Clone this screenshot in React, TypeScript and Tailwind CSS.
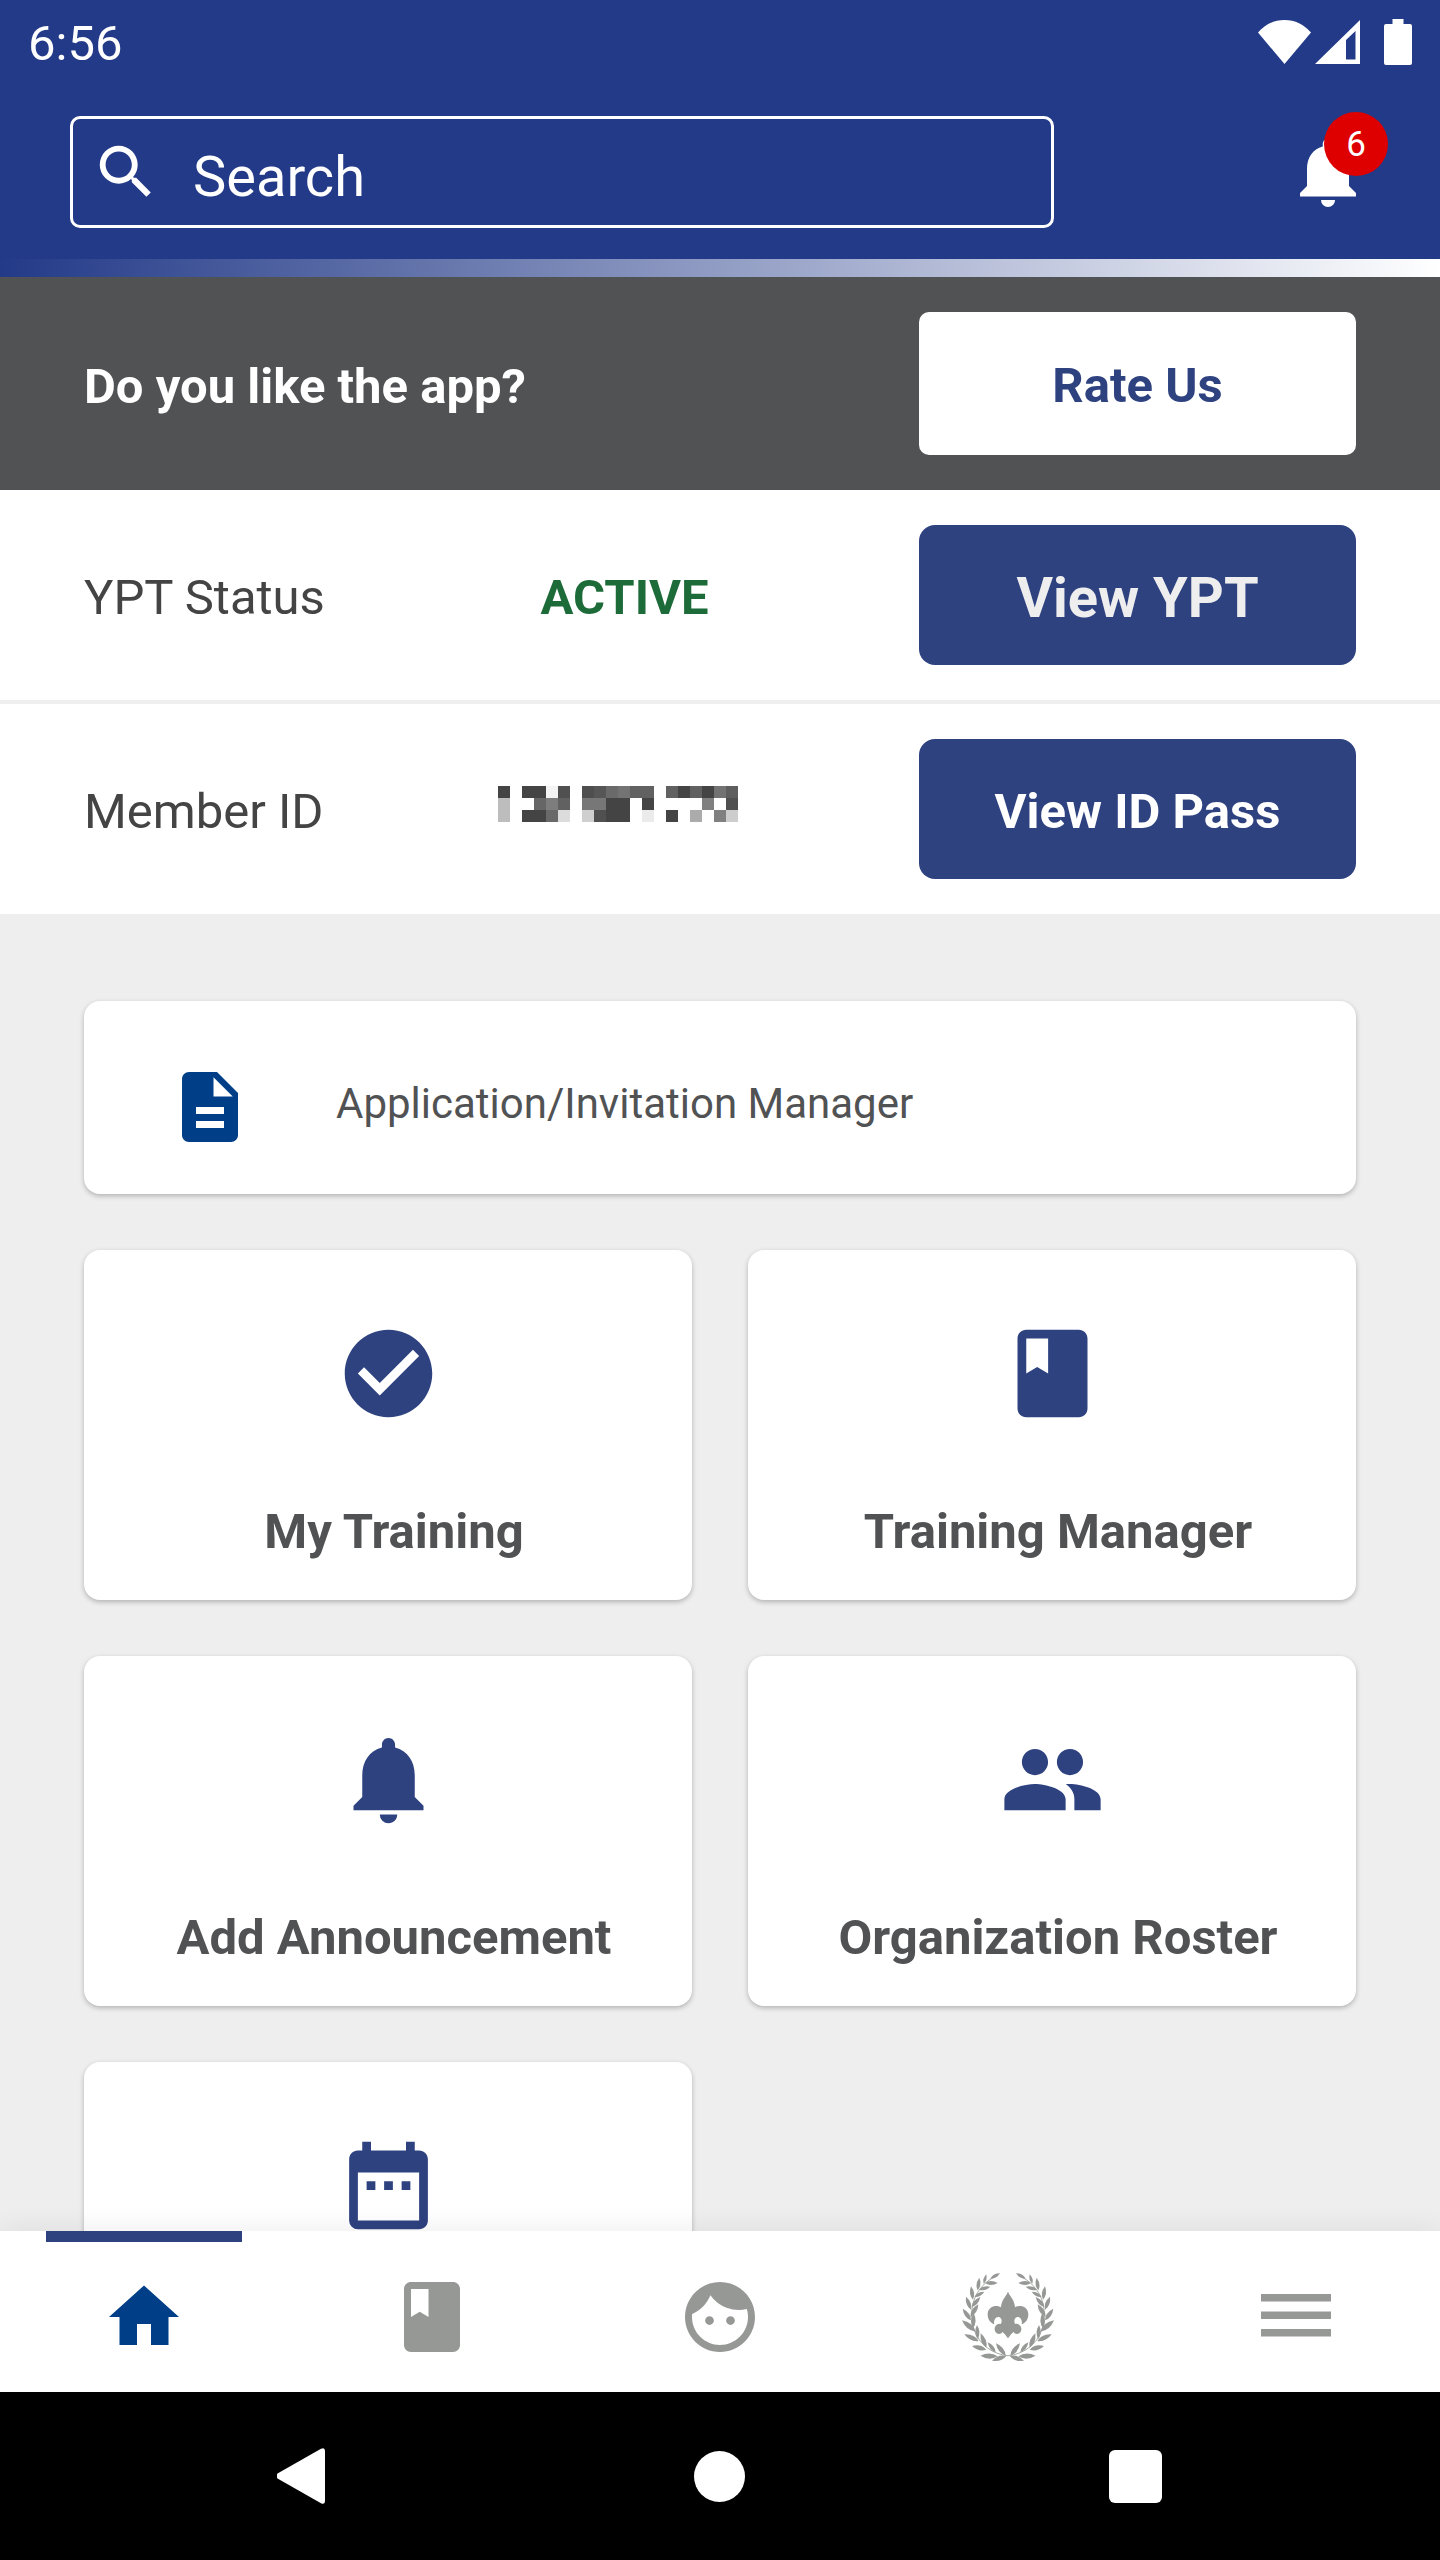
import type { ReactNode } from 'react'
import {
  MdBook,
  MdCheckCircle,
  MdDateRange,
  MdDescription,
  MdFace,
  MdHome,
  MdNotifications,
  MdPeople,
  MdSearch,
} from 'react-icons/md'

// Grey level per 12px block, null = nothing painted
const idBlocks = [
  ['#444', null, '#444', '#444', '#f4f4f4', '#505050', null, '#4e4e4e', '#565656', '#6a6a6a', '#737373', '#616161', '#616161', null, '#616161', '#444', '#616161', '#444', '#737373', '#5e5e5e'],
  ['#bdbdbd', null, null, '#666', '#7d7d7d', '#616161', null, '#777', '#777', '#444', '#444', null, '#444', null, null, null, null, '#808080', null, '#505050'],
  ['#bdbdbd', null, '#444', '#444', '#696969', '#dcdcdc', null, '#cfcfcf', '#505050', '#444', '#444', null, '#ebebeb', null, '#444', null, '#ababab', null, '#808080', '#cdcdcd'],
]

// Laurel leaves, left branch: base x/y -> tip x/y
const leaves = [
  [230, 345, 187, 359],
  [204, 346, 152, 344],
  [170, 326, 127, 315],
  [147, 300, 104, 280],
  [138, 272, 97, 238],
  [124, 238, 99, 203],
  [124, 206, 109, 167],
  [130, 176, 124, 136],
  [144, 148, 149, 110],
  [162, 128, 170, 100],
  [182, 113, 211, 97],
  [228, 344, 199, 307],
  [198, 334, 174, 304],
  [170, 320, 153, 277],
  [144, 294, 142, 252],
  [130, 262, 132, 216],
  [122, 228, 146, 190],
  [126, 198, 152, 168],
  [134, 168, 164, 152],
  [148, 146, 182, 137],
  [166, 126, 204, 126],
]

function leafPath([x1, y1, x2, y2]: number[]) {
  const dx = x2 - x1
  const dy = y2 - y1
  const mx = x1 + dx * 0.45
  const my = y1 + dy * 0.45
  const bend = 0.3
  return `M${x1} ${y1}Q${mx - dy * bend} ${my + dx * bend} ${x2} ${y2}Q${mx + dy * bend} ${my - dx * bend} ${x1} ${y1}z`
}

function EmblemHalf() {
  return (
    <>
      {leaves.map((leaf) => (
        <path key={leaf.join()} d={leafPath(leaf)} />
      ))}
      <path
        d="M235 344C190 340 150 312 134 268C118 220 122 150 190 110"
        fill="none"
        stroke="currentColor"
        strokeWidth="2.5"
      />
      <path d="M236 152C228 166 215 178 214 199C203 190 174 194 174 220C174 235 182 246 194 250C191 238 198 227 207 228C216 230 218 240 214 249C203 246 194 256 195 266C198 281 214 282 218 273C225 276 229 286 236 292z" />
    </>
  )
}

function ScoutEmblem() {
  return (
    <svg viewBox="97 96 276 267" className="h-[89px] w-[92px]" fill="currentColor" aria-hidden="true">
      <EmblemHalf />
      <g transform="translate(470 0) scale(-1 1)">
        <EmblemHalf />
      </g>
    </svg>
  )
}

function StatusBar() {
  return (
    <div className="flex h-[84px] items-center justify-between px-7">
      <span className="pt-1 text-[49px] leading-[58px]">6:56</span>
      <div className="flex items-center">
        <svg viewBox="0 0 53 44" className="mr-1 h-11 w-[53px]" fill="currentColor" aria-hidden="true">
          <path d="M0 12.5C7 4.5 16 0 26.5 0S46 4.5 53 12.5L26.5 44z" />
        </svg>
        <svg viewBox="0 0 45 44" className="mr-6 h-11 w-[45px]" fill="currentColor" aria-hidden="true">
          <path fillRule="evenodd" d="M0 44L45 0V44zM31 20V39.500H40.500V11z" />
        </svg>
        <svg viewBox="0 0 28 46" className="h-[46px] w-7" fill="currentColor" aria-hidden="true">
          <path d="M8.500 0H19.500V5H26Q28 5 28 7V44Q28 46 26 46H2Q0 46 0 44V7Q0 5 2 5H8.500z" />
        </svg>
      </div>
    </div>
  )
}

function Header() {
  return (
    <header className="bg-[#233a88] text-white">
      <StatusBar />
      <div className="flex h-[175px] items-center px-[70px]">
        <label className="mr-[232px] flex h-28 flex-1 items-center gap-8 rounded-[10px] border-3 border-white pl-[18px]">
          <MdSearch className="size-[70px] shrink-0" aria-hidden="true" />
          <input
            type="search"
            placeholder="Search"
            aria-label="Search"
            className="min-w-0 flex-1 bg-transparent pt-2.5 text-[56px] leading-[66px] outline-none placeholder:text-white"
          />
        </label>
        <button type="button" aria-label="Notifications" className="relative">
          <MdNotifications className="size-[84px]" aria-hidden="true" />
          <span className="absolute -top-[18px] left-[38px] flex size-16 items-center justify-center rounded-full bg-[#de0000] pt-0.5 text-[35px] leading-none">
            6
          </span>
        </button>
      </div>
      <div className="h-[18px] bg-linear-[90deg,#233a88,#fff]" />
    </header>
  )
}

function StatusRow({ label, value, action }: { label: string; value: ReactNode; action: ReactNode }) {
  return (
    <div className="flex items-center px-[84px] py-[35px]">
      <span className="w-[246px] pt-1.5 text-[49px] leading-[58px] whitespace-nowrap text-[#444]">{label}</span>
      <div className="flex flex-1 justify-center">{value}</div>
      {action}
    </div>
  )
}

function Tile({ icon, label, name }: { icon: ReactNode; label?: string; name?: string }) {
  return (
    <button
      type="button"
      aria-label={name}
      className="flex min-h-[350px] flex-col items-center rounded-2xl bg-white pt-[71px] text-[105px] text-[#2e4280] shadow-[0_2px_5px_rgba(0,0,0,0.25)]"
    >
      {icon}
      {label && (
        <span className="mt-[77px] pl-3 text-[49px] leading-[58px] font-bold text-[#515253]">{label}</span>
      )}
    </button>
  )
}

function Tab({ icon, name, active }: { icon: ReactNode; name: string; active?: boolean }) {
  return (
    <a
      href="#"
      aria-label={name}
      aria-current={active ? 'page' : undefined}
      className={`flex flex-1 flex-col items-center text-[84px] ${active ? 'text-[#003f87]' : 'text-[#969896]'}`}
    >
      <span className={`h-[11px] w-[196px] ${active ? 'bg-[#2e4280]' : ''}`} />
      <span className="flex h-[150px] items-center">{icon}</span>
    </a>
  )
}

export default function App() {
  return (
    <div className="flex h-screen flex-col bg-[#eee] font-['Roboto',sans-serif]">
      <Header />

      <main className="min-h-0 flex-1 overflow-y-auto [scrollbar-width:none]">
        {/* Rating prompt */}
        <section className="flex items-center justify-between bg-[#515254] px-[84px] py-[35px]">
          <h2 className="pt-1.5 text-[49px] leading-[58px] font-bold text-white">Do you like the app?</h2>
          <button
            type="button"
            className="h-[143px] w-[437px] rounded-[10px] bg-white pt-1 text-[49px] leading-[58px] font-bold text-[#2e4280]"
          >
            Rate Us
          </button>
        </section>

        {/* Membership status */}
        <section className="divide-y-4 divide-[#eee] bg-white">
          <StatusRow
            label="YPT Status"
            value={<span className="pt-1.5 text-[49px] leading-[58px] font-bold text-[#1e6b3a]">ACTIVE</span>}
            action={
              <button
                type="button"
                className="h-[140px] w-[437px] rounded-2xl bg-[#2e4280] pt-1.5 text-[56px] leading-[66px] font-bold text-[#eee]"
              >
                View YPT
              </button>
            }
          />
          <StatusRow
            label="Member ID"
            value={
              <svg viewBox="0 0 20 3" className="mr-3.5 mb-2.5 h-9 w-60" shapeRendering="crispEdges" role="img" aria-label="Hidden member ID">
                {idBlocks.map((row, y) =>
                  row.map((fill, x) => fill && <rect key={`${x}-${y}`} x={x} y={y} width="1" height="1" fill={fill} />),
                )}
              </svg>
            }
            action={
              <button
                type="button"
                className="h-[140px] w-[437px] rounded-2xl bg-[#2e4280] pt-1.5 text-[49px] leading-[58px] font-bold text-white"
              >
                View ID Pass
              </button>
            }
          />
        </section>

        {/* Shortcuts */}
        <section className="flex flex-col gap-14 px-[84px] pt-[87px] pb-14">
          <button
            type="button"
            className="flex items-center gap-[84px] rounded-2xl bg-white px-[84px] pt-16 pb-[45px] shadow-[0_2px_5px_rgba(0,0,0,0.25)]"
          >
            <MdDescription className="size-[84px] text-[#003f87]" aria-hidden="true" />
            <span className="pb-1.5 text-[42px] leading-[50px] text-[#515253]">Application/Invitation Manager</span>
          </button>
          <div className="grid grid-cols-2 gap-14">
            <Tile icon={<MdCheckCircle />} label="My Training" />
            <Tile icon={<MdBook />} label="Training Manager" />
            <Tile icon={<MdNotifications />} label="Add Announcement" />
            <Tile icon={<MdPeople />} label="Organization Roster" />
            <Tile icon={<MdDateRange />} name="Calendar" />
          </div>
        </section>
      </main>

      <nav className="z-10 flex bg-white shadow-[0_0_28px_rgba(0,0,0,0.08)]">
        <Tab icon={<MdHome />} name="Home" active />
        <Tab icon={<MdBook />} name="Training" />
        <Tab icon={<MdFace />} name="Profile" />
        <Tab icon={<ScoutEmblem />} name="Advancement" />
        <Tab
          name="Menu"
          icon={
            <svg viewBox="0 0 70 46" className="h-[46px] w-[70px]" fill="currentColor" aria-hidden="true">
              <path d="M0 0H70V7.500H0zM0 17.500H70V25H0zM0 35H70V42.500H0z" />
            </svg>
          }
        />
      </nav>

      {/* Android system buttons */}
      <footer className="grid h-[168px] grid-cols-3 items-center justify-items-center bg-black px-[97px] text-white">
        <button type="button" aria-label="Back">
          <svg viewBox="0 0 56 56" className="size-14" fill="currentColor" aria-hidden="true">
            <path d="M.5 25.500L44 .8Q48 -1 48 3V53Q48 57 44 55.200L.5 30.500Q-1.500 28 .5 25.500z" />
          </svg>
        </button>
        <button type="button" aria-label="Home screen" className="size-[51px] rounded-full bg-white" />
        <button type="button" aria-label="Recent apps" className="size-[53px] rounded-md bg-white" />
      </footer>
    </div>
  )
}
